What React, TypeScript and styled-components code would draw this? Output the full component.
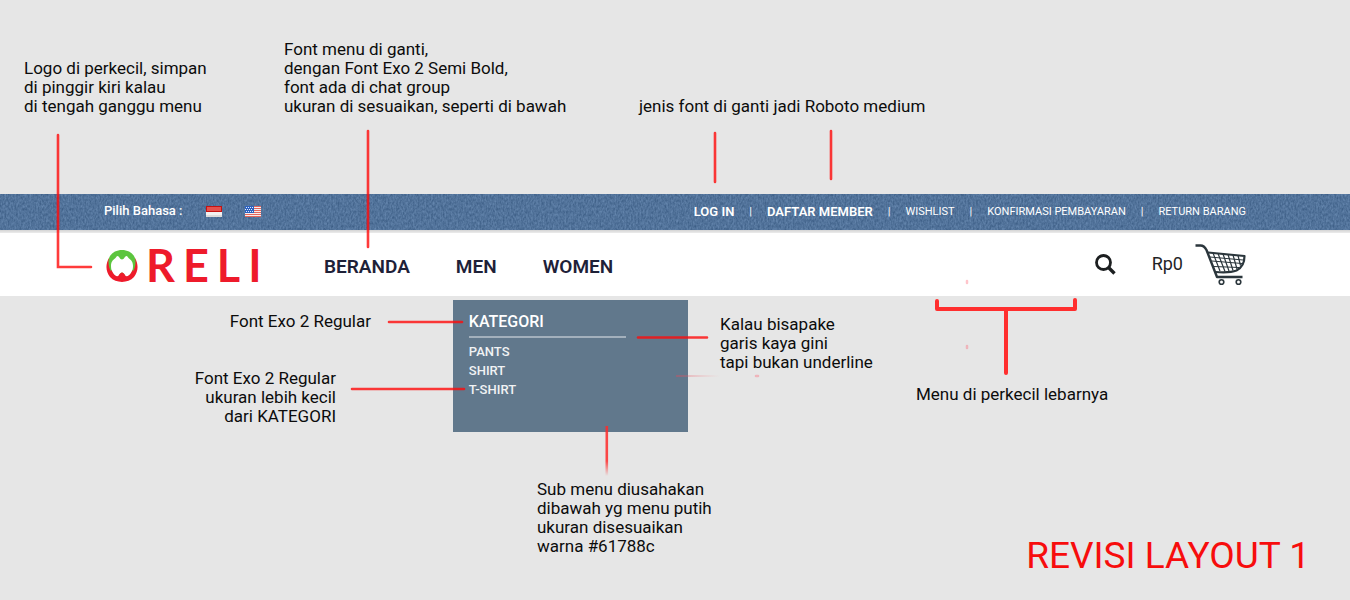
import React from "react";
import styled, { createGlobalStyle, css } from "styled-components";

const GlobalStyle = createGlobalStyle`
  *, *::before, *::after { box-sizing: border-box; }
  body {
    margin: 0;
    background: #e6e6e6;
    color: #0c0c0c;
    font-family: Roboto, "Liberation Sans", sans-serif;
  }
  ul { list-style: none; margin: 0; padding: 0; }
  a { color: inherit; text-decoration: none; }
  button { border: 0; padding: 0; background: none; cursor: pointer; display: block; }
`;

const Board = styled.main`
  position: relative;
  min-width: 1350px;
  min-height: 100vh;
  display: flex;
  flex-direction: column;
`;

const TopNotes = styled.section`
  display: flex;
  align-items: flex-end;
  height: 194px;
  padding: 0 24px 78px;
`;

const Note = styled.p<{ $width?: number; $right?: boolean; $inset?: number }>`
  margin: 0;
  font-size: 17px;
  line-height: 19px;
  white-space: pre-line;
  ${(p) => p.$width && css`width: ${p.$width}px;`}
  ${(p) => p.$right && css`text-align: right;`}
  ${(p) => p.$inset && css`padding-right: ${p.$inset}px;`}
`;

const UtilityBar = styled.div`
  position: relative;
  display: flex;
  align-items: center;
  justify-content: space-between;
  height: 36px;
  padding: 0 104px;
  background: #4d7099;
  color: #fff;
`;

const Denim = styled.svg`
  position: absolute;
  inset: 0;
  width: 100%;
  height: 100%;
`;

const Languages = styled.div`
  position: relative;
  display: flex;
  align-items: center;
  gap: 23px;
  padding-bottom: 2px;
  font-size: 13px;
  font-weight: 500;
  line-height: 16px;
`;

const Links = styled.ul`
  position: relative;
  display: flex;
  align-items: center;
  line-height: 16px;
`;

const LinkItem = styled.li<{ $strong?: boolean }>`
  display: flex;
  font-size: ${(p) => (p.$strong ? 13 : 11)}px;
  font-weight: ${(p) => (p.$strong ? 600 : 400)};
  &:not(:first-child)::before {
    content: "|";
    margin: 0 15px;
    font-size: 11px;
    font-weight: 400;
  }
`;

const MenuBar = styled.header`
  display: flex;
  align-items: center;
  height: 66px;
  padding: 2px 104px 0;
  background: linear-gradient(#d4d4d4, #ececec 3px, #fff 3px);
`;

const Logo = styled.a`
  display: flex;
  align-items: center;
  gap: 8px;
  width: 220px;
  padding: 2px 0 0 2px;
  color: #ee1b2b;
  font-family: Lato, sans-serif;
  font-size: 45px;
  font-weight: 700;
  line-height: 48px;
  letter-spacing: 8px;
`;

const Nav = styled.ul`
  display: flex;
  flex: 1;
  gap: 46px;
  padding-top: 6px;
  color: #1e2138;
  font-size: 19px;
  font-weight: 600;
  line-height: 24px;
`;

const NavItem = styled.li`
  position: relative;
`;

const Submenu = styled.div`
  position: absolute;
  top: 45px;
  left: -3px;
  width: 235px;
  height: 132px;
  padding: 12px 16px;
  background: #61788c;
  color: #f0f2f4;
`;

const SubmenuTitle = styled.h2`
  width: 157px;
  margin: 0 0 4px;
  padding-bottom: 5px;
  border-bottom: 2px solid #a3b0bc;
  color: #fff;
  font-size: 16px;
  font-weight: 500;
  line-height: 19px;
`;

const SubmenuLink = styled.a`
  display: block;
  font-size: 13px;
  font-weight: 500;
  line-height: 19px;
`;

const Tools = styled.div`
  display: flex;
  align-items: center;
`;

const CartButton = styled.button`
  display: flex;
  align-items: center;
  gap: 12px;
  margin-left: 36px;
  color: #1f2427;
  font: 400 18px/24px Roboto, sans-serif;
`;

const BottomNotes = styled.section`
  display: flex;
  flex: 1;
  min-height: 304px;
`;

const NoteColumn = styled.div<{ $top: number; $width?: number; $left?: number }>`
  display: flex;
  flex-direction: column;
  padding-top: ${(p) => p.$top}px;
  padding-left: ${(p) => p.$left || 0}px;
  ${(p) => (p.$width ? css`width: ${p.$width}px;` : css`flex: 1;`)}
`;

const LeftColumn = styled(NoteColumn)`
  gap: 38px;
`;

const Title = styled.h1`
  margin: auto 40px 22px 0;
  text-align: right;
  color: #f70d0d;
  font-size: 37px;
  font-weight: 400;
  line-height: 44px;
`;

const Strokes = styled.svg`
  position: absolute;
  top: 0;
  left: 0;
  pointer-events: none;
`;

const IndonesiaFlag = () => (
  <svg width="16" height="11" viewBox="0 0 16 11" display="block">
    <rect width="16" height="11" fill="#f1f1f1" />
    <rect width="16" height="6" fill="#c51212" />
    <rect x="1" y="1" width="14" height="4" fill="#e4504c" />
    <rect y="9" width="16" height="2" fill="#dcdcdc" />
  </svg>
);

const UsaFlag = () => (
  <svg width="16" height="11" viewBox="0 0 16 11" display="block">
    <rect width="16" height="11" fill="#f6eeee" />
    {[0, 2, 4, 6, 8, 10].map((y) => (
      <rect key={y} y={y} width="16" height="1" fill="#e2655c" />
    ))}
    <rect width="9" height="7" fill="#2c62c0" />
    {[1, 3, 5].map((y) =>
      [1, 3, 5, 7].map((x) => (
        <rect key={`${x}-${y}`} x={y === 3 ? x - 1 : x} y={y} width="1" height="1" fill="#dfe9ff" />
      ))
    )}
  </svg>
);

const LogoMark = () => (
  <svg width="32" height="33" viewBox="0 0 32 33" display="block">
    <path d="M3 9C-1 16 0 23 4 28c6 6.500 18 6.500 24 0 4-5 5-12 1-19L16 16Z" fill="#ee1b2b" />
    <path d="M16 1C9 1 3 5 2.500 12c0 6 1.500 10 5 13.500h17c3.500-3.500 5-7.500 5-13.500C29 5 23 1 16 1Z" fill="#5cc53e" />
    <path d="M11.500 7c1.500 0 2.500 3.500 4.500 3.500S19 7 20.500 7c1 0 1.500 1.500 2.500 2.500 2 1.500 4 3 4 7.500 0 6-3 9.500-6 10.500-2 .5-2.500-4-5-4s-3 4.500-5 4C8 26.500 5 23 5 17c0-4.500 2-6 4-7.500 1-1 1.500-2.500 2.500-2.500Z" fill="#fff" />
    <path d="M5.500 21c1.500 4 3.500 5.500 5.500 6.500 2 .5 2.500-4 5-4s3 4.500 5 4c2-1 4-2.500 5.500-6.500L28 24c-3 5-7 8-12 8S7 29 4 24Z" fill="#ee1b2b" />
  </svg>
);

const SearchIcon = () => (
  <svg width="21" height="21" viewBox="0 0 21 21" fill="none" stroke="#1c1f20" display="block">
    <circle cx="8.500" cy="8.500" r="7" strokeWidth="2.800" />
    <path d="m13.500 13.500 6 6" strokeWidth="3.400" />
  </svg>
);

const CartIcon = () => (
  <svg width="51" height="43" viewBox="0 0 51 43" fill="none" stroke="#2b363c" strokeLinejoin="round" display="block">
    <path d="M.500 2.500h5c3 0 4.500 1.500 6 4.500l10.500 27h25.500" strokeWidth="2.400" />
    <path d="M13 9.500 49.500 13c0 7-3 12-8 14.500-5 2-14 2-21 1.500" strokeWidth="2.200" />
    <path d="m15 14 33 3M17 18l30 2.500M19 23.500l25 1" strokeWidth="1" />
    <path d="m18 10 7 18M23 10.500l7 18M28 11l6 17M33 11.500l5 16M38 12l4 14M43 12.500l2.500 10" strokeWidth="1.200" />
    <circle cx="26.500" cy="39" r="2.300" strokeWidth="1.600" />
    <circle cx="43.500" cy="39" r="2.300" strokeWidth="1.600" />
  </svg>
);

const PointerStrokes = () => (
  <Strokes width="1350" height="600" viewBox="0 0 1350 600" fill="none" stroke="#ff0a0a" strokeLinecap="round" aria-hidden="true">
    <defs>
      <linearGradient id="fadeDown" gradientUnits="userSpaceOnUse" x1="0" y1="426" x2="0" y2="476">
        <stop offset="0.700" stopColor="#ff2a2a" stopOpacity="0.850" />
        <stop offset="1" stopColor="#ff2a2a" stopOpacity="0" />
      </linearGradient>
      <linearGradient id="fadeRight" gradientUnits="userSpaceOnUse" x1="676" y1="0" x2="720" y2="0">
        <stop offset="0" stopColor="#e0485a" stopOpacity="0.400" />
        <stop offset="1" stopColor="#ff8080" stopOpacity="0" />
      </linearGradient>
    </defs>
    <g strokeWidth="2.600" strokeOpacity="0.800">
      <path d="M58 135v132h33" />
      <path d="M368 131v116" />
      <path d="M715 133v49M831 131v48" />
      <path d="M389 322h73M352 389h112M638 337.500h69" />
    </g>
    <path d="M937 301v8h138v-9M1006 309v64" stroke="#ff2e2e" strokeWidth="4" strokeLinejoin="round" />
    <rect x="605.500" y="426" width="2.600" height="50" fill="url(#fadeDown)" stroke="none" />
    <path d="M676 375h44v2h-44z" fill="url(#fadeRight)" stroke="none" />
    <g stroke="#ff5a6a" strokeOpacity="0.350" strokeWidth="2.500">
      <path d="M756 376h2" />
      <path d="M967 281v2M967 346v2" />
    </g>
  </Strokes>
);

export default function App() {
  return (
    <>
      <GlobalStyle />
      <Board>
        <TopNotes>
          <Note $width={260}>{"Logo di perkecil, simpan\ndi pinggir kiri kalau\ndi tengah ganggu menu"}</Note>
          <Note $width={355}>
            {"Font menu di ganti,\ndengan Font Exo 2 Semi Bold,\nfont ada di chat group\nukuran di sesuaikan, seperti di bawah"}
          </Note>
          <Note>jenis font di ganti jadi Roboto medium</Note>
        </TopNotes>

        <UtilityBar>
          <Denim aria-hidden="true">
            <filter id="denim" x="0" y="0" width="100%" height="100%" colorInterpolationFilters="sRGB">
              <feTurbulence type="fractalNoise" baseFrequency="0.6 0.35" numOctaves="2" seed="4" />
              <feColorMatrix values="0.22 0 0 0 0.21  0.22 0 0 0 0.34  0.22 0 0 0 0.495  0 0 0 0 1" />
            </filter>
            <rect width="100%" height="100%" filter="url(#denim)" />
          </Denim>
          <Languages>
            <span>Pilih Bahasa :</span>
            <button aria-label="Bahasa Indonesia"><IndonesiaFlag /></button>
            <button aria-label="English"><UsaFlag /></button>
          </Languages>
          <Links>
            <LinkItem $strong><a href="#login">LOG IN</a></LinkItem>
            <LinkItem $strong><a href="#daftar">DAFTAR MEMBER</a></LinkItem>
            <LinkItem><a href="#wishlist">WISHLIST</a></LinkItem>
            <LinkItem><a href="#konfirmasi">KONFIRMASI PEMBAYARAN</a></LinkItem>
            <LinkItem><a href="#return">RETURN BARANG</a></LinkItem>
          </Links>
        </UtilityBar>

        <MenuBar>
          <Logo href="#beranda"><LogoMark />RELI</Logo>
          <Nav>
            <NavItem><a href="#beranda">BERANDA</a></NavItem>
            <NavItem>
              <a href="#men">MEN</a>
              <Submenu>
                <SubmenuTitle>KATEGORI</SubmenuTitle>
                <SubmenuLink href="#pants">PANTS</SubmenuLink>
                <SubmenuLink href="#shirt">SHIRT</SubmenuLink>
                <SubmenuLink href="#tshirt">T-SHIRT</SubmenuLink>
              </Submenu>
            </NavItem>
            <NavItem><a href="#women">WOMEN</a></NavItem>
          </Nav>
          <Tools>
            <button aria-label="Cari"><SearchIcon /></button>
            <CartButton>Rp0<CartIcon /></CartButton>
          </Tools>
        </MenuBar>

        <BottomNotes>
          <LeftColumn $top={16} $width={371}>
            <Note $right>Font Exo 2 Regular</Note>
            <Note $right $inset={35}>{"Font Exo 2 Regular\nukuran lebih kecil\ndari KATEGORI"}</Note>
          </LeftColumn>
          <NoteColumn $top={184} $left={166} $width={349}>
            <Note>{"Sub menu diusahakan\ndibawah yg menu putih\nukuran disesuaikan\nwarna #61788c"}</Note>
          </NoteColumn>
          <NoteColumn $top={19} $width={196}>
            <Note>{"Kalau bisapake\ngaris kaya gini\ntapi bukan underline"}</Note>
          </NoteColumn>
          <NoteColumn $top={89}>
            <Note>Menu di perkecil lebarnya</Note>
            <Title>REVISI LAYOUT 1</Title>
          </NoteColumn>
        </BottomNotes>
        <PointerStrokes />
      </Board>
    </>
  );
}
